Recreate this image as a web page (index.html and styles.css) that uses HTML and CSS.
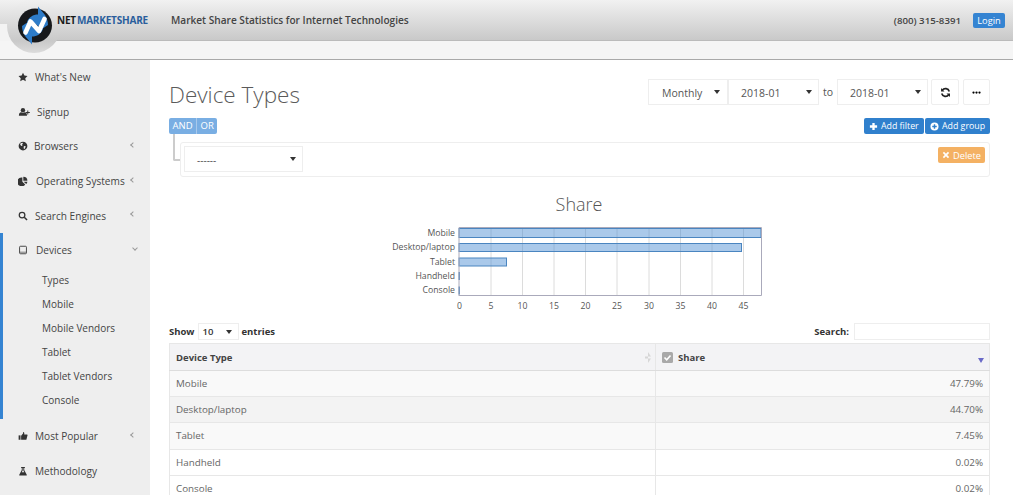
FILE: index.html
```html
<!DOCTYPE html>
<html lang="en">
<head>
<meta charset="utf-8">
<title>Device Types</title>
<link rel="stylesheet" href="styles.css">
</head>
<body>
<div class="app">
  <header class="top">
    <div class="bar">
      <a class="brand"><span class="net">NET</span><span class="ms">MARKETSHARE</span></a>
      <span class="tagline">Market Share Statistics for Internet Technologies</span>
      <span class="phone">(800) 315-8391</span>
      <a class="login">Login</a>
    </div>
    <div class="subbar"></div>
    <div class="corner"></div>
    <div class="halo"></div>
    <svg class="logo" viewBox="0 0 36 41" width="36" height="41">
      <circle cx="18" cy="20.500" r="17" fill="#17191c"/>
      <path d="M10 17C12 12 16 9.500 21 9.500L21 1.500L28 10C30 13 31 17 31 20L25 24L16 17Z" fill="#2e7cc9"/>
      <path d="M26 24C24 29 20 31.500 15 31.500L15 39.500L8 31C6 28 5 24 5 21L11 17L20 24Z" fill="#2e7cc9"/>
      <path d="M8.500 27.500L13.500 16.500L22 26L27.500 14" fill="none" stroke="#fff" stroke-width="4.600" stroke-linejoin="round" stroke-linecap="round"/>
    </svg>
  </header>
  <div class="main">
    <nav class="side">
      <a class="item"><svg class="ic" viewBox="0 0 16 16"><path d="M8 1l2.200 4.600 5 .7-3.600 3.500.9 5L8 12.400l-4.500 2.400.9-5L.8 6.300l5-.7z"/></svg><span>What's New</span></a>
      <a class="item"><svg class="ic wide" viewBox="0 0 18 16"><circle cx="6.500" cy="5" r="3.500"/><path d="M0 14c0-4 2-5.500 3.500-5.500 1 .8 5 .8 6 0 1.500 0 3.500 1.500 3.500 5.500z"/><path d="M13.500 5.500h1.500v2.500h2.500v1.500H15V12h-1.500V9.500H11V8h2.500z"/></svg><span>Signup</span></a>
      <a class="item"><svg class="ic tight" viewBox="0 0 16 16"><circle cx="8" cy="8" r="7"/><path fill="#eee" d="M4 3.500l3-.8 1 1.300-1.500 1.500.8 1.500-2 1-1.800-2zM9.500 8l3 .5L11 12l-1.500 1-.5-3z"/></svg><span>Browsers</span><i class="chev"></i></a>
      <a class="item"><svg class="ic loose" viewBox="0 0 16 16"><path d="M7 2.500V9l4.500 4.500A7 7 0 1 1 7 2.500z"/><path d="M8.500 1a6.500 6.500 0 0 1 6.500 6.500H8.500z"/><path d="M9 9h6a6.500 6.500 0 0 1-1.800 3.800z"/></svg><span>Operating Systems</span><i class="chev"></i></a>
      <a class="item"><svg class="ic" viewBox="0 0 16 16"><circle cx="6.500" cy="6.500" r="4.500" fill="none" stroke="#333" stroke-width="2"/><path d="M10 10l4.500 4.500" fill="none" stroke="#333" stroke-width="2.400"/></svg><span>Search Engines</span><i class="chev"></i></a>
      <div class="group">
        <a class="item"><svg class="ic loose" viewBox="0 0 16 16"><rect x="2.500" y="2" width="11" height="12" rx="1.500" fill="none" stroke="#333" stroke-width="1.400"/><path d="M2.500 11.500h11" stroke="#333" stroke-width="1"/></svg><span>Devices</span><i class="chev down"></i></a>
        <ul class="sub">
          <li>Types</li>
          <li>Mobile</li>
          <li>Mobile Vendors</li>
          <li>Tablet</li>
          <li>Tablet Vendors</li>
          <li>Console</li>
        </ul>
      </div>
      <a class="item"><svg class="ic" viewBox="0 0 16 16"><rect x="1" y="7" width="3" height="7"/><path d="M5 7.500L8 4V1.500c1.500 0 2.500 1 2 4h4.500c1 0 1 1.500.5 2l-1.500 6c-.2.500-.5.500-1 .5H5z"/></svg><span>Most Popular</span><i class="chev"></i></a>
      <a class="item"><svg class="ic" viewBox="0 0 16 16"><path d="M5 1.500h6V3h-1v3.500l4 7.500v1H2v-1l4-7.500V3H5zM7.500 3v4L6 10h4L8.500 7V3z" fill-rule="evenodd"/></svg><span>Methodology</span></a>
    </nav>
    <main class="content">
      <div class="head-row">
        <h1>Device Types</h1>
        <div class="controls">
          <div class="sel sel-a">Monthly</div>
          <div class="sel sel-b">2018-01</div>
          <span class="to">to</span>
          <div class="sel sel-b">2018-01</div>
          <button class="tool"><svg viewBox="0 0 16 16" width="11" height="11"><path d="M13.500 6.500A5.700 5.700 0 0 0 3.300 4.800" fill="none" stroke="#222" stroke-width="2.400"/><path d="M1.500 1.500v5h5z" fill="#222"/><path d="M2.500 9.500a5.700 5.700 0 0 0 10.200 1.700" fill="none" stroke="#222" stroke-width="2.400"/><path d="M14.500 14.500v-5h-5z" fill="#222"/></svg></button>
          <button class="tool last"><svg viewBox="0 0 12 4" width="9" height="3"><circle cx="2" cy="2" r="1.500"/><circle cx="6" cy="2" r="1.500"/><circle cx="10" cy="2" r="1.500"/></svg></button>
        </div>
      </div>
      <div class="logic-row">
        <div class="logic"><span class="lg">AND</span><span class="lg">OR</span></div>
        <div class="adds">
          <a class="add add-f"><svg viewBox="0 0 10 10" width="9" height="9"><path d="M3.700 1h2.600v2.700H9v2.600H6.300V9H3.700V6.300H1V3.700h2.700z" fill="#fff"/></svg>Add filter</a>
          <a class="add add-g"><svg viewBox="0 0 10 10" width="9" height="9"><path fill-rule="evenodd" d="M5 .5a4.500 4.500 0 1 1 0 9 4.500 4.500 0 0 1 0-9zM4.200 2.500v1.700H2.500v1.600h1.700v1.700h1.600V5.800h1.700V4.200H5.800V2.500z" fill="#fff"/></svg>Add group</a>
        </div>
      </div>
      <div class="rule-wrap">
        <div class="rule">
          <div class="sel sel-c">------</div>
          <a class="del"><svg viewBox="0 0 10 10" width="8" height="8"><path d="M2.500 1L5 3.500 7.500 1 9 2.500 6.500 5 9 7.500 7.500 9 5 6.500 2.500 9 1 7.500 3.500 5 1 2.500z" fill="#fff"/></svg>Delete</a>
        </div>
      </div>
      <svg class="chart" viewBox="0 0 821 137" width="821" height="137">
        <text class="c-title" x="410" y="25" text-anchor="middle">Share</text>
        <g class="grid">
          <path d="M322 42v67M353.500 42v67M385 42v67M416.500 42v67M448 42v67M480 42v67M511.500 42v67M543 42v67M574.500 42v67"/>
        </g>
        <g class="bars">
          <rect x="290" y="42.500" width="302" height="9"/>
          <rect x="290" y="57.500" width="282.500" height="8"/>
          <rect x="290" y="72" width="47.500" height="8"/>
          <rect x="290" y="86.500" width="0.500" height="7"/>
          <rect x="290" y="101" width="0.500" height="7"/>
        </g>
        <path class="axis" d="M290 110V41.500H592.500V109.500H290"/>
        <g class="labels" text-anchor="end">
          <text x="286" y="49.500">Mobile</text>
          <text x="286" y="64">Desktop/laptop</text>
          <text x="286" y="78.500">Tablet</text>
          <text x="286" y="92.500">Handheld</text>
          <text x="286" y="107">Console</text>
        </g>
        <g class="labels" text-anchor="middle">
          <text x="290.500" y="122.500">0</text>
          <text x="322" y="122.500">5</text>
          <text x="353.500" y="122.500">10</text>
          <text x="385" y="122.500">15</text>
          <text x="416.500" y="122.500">20</text>
          <text x="448" y="122.500">25</text>
          <text x="480" y="122.500">30</text>
          <text x="511.500" y="122.500">35</text>
          <text x="543" y="122.500">40</text>
          <text x="574.500" y="122.500">45</text>
        </g>
      </svg>
      <div class="dt-row">
        <label class="dt-label">Show <span class="sel sel-d">10</span> entries</label>
        <label class="dt-label search">Search: <input class="dt-input" type="text"></label>
      </div>
      <table class="dt">
        <thead>
          <tr>
            <th class="c1">Device Type<i class="sort"></i></th>
            <th class="c2"><svg class="check" viewBox="0 0 11 11" width="11" height="11"><rect width="11" height="11" rx="1.500" fill="#a9a9a9"/><path d="M2.500 5.500L4.700 7.800 8.500 3.500" fill="none" stroke="#fff" stroke-width="1.600"/></svg>Share<i class="sorted"></i></th>
          </tr>
        </thead>
        <tbody>
          <tr class="s1"><td>Mobile</td><td class="num">47.79%</td></tr>
          <tr class="s2"><td>Desktop/laptop</td><td class="num">44.70%</td></tr>
          <tr class="s1"><td>Tablet</td><td class="num">7.45%</td></tr>
          <tr><td>Handheld</td><td class="num">0.02%</td></tr>
          <tr><td>Console</td><td class="num">0.02%</td></tr>
        </tbody>
      </table>
    </main>
  </div>
</div>
</body>
</html>
```

FILE: styles.css
```css
* { box-sizing: border-box; }
html, body { margin: 0; padding: 0; }
body { font-family: "Open Sans", "Liberation Sans", sans-serif; font-size: 10px; color: #444; background: #fff; }
.app { width: 1013px; height: 495px; overflow: hidden; }

.top { position: relative; height: 60px; border-bottom: 1px solid #a9a9a9; background: #f5f5f5; }
.bar { height: 41px; display: flex; align-items: center; padding: 0 8px 0 57px; background: linear-gradient(#f1f1f1, #c9c9c9); border-bottom: 1px solid #bbb; }
.brand { position: relative; z-index: 6; font-size: 10px; font-weight: 700; width: 114px; letter-spacing: -0.200px; }
.net { color: #1a1a1a; margin-right: 1px; }
.ms { color: #2a5e9c; }
.tagline { position: relative; z-index: 6; font-weight: 600; color: #444; font-size: 10.100px; }
.phone { margin-left: auto; font-weight: 600; color: #444; font-size: 9.700px; }
.login { margin-left: 12px; width: 32px; height: 15px; line-height: 15px; text-align: center; color: #fff; background: #3584d2; border-radius: 2px; font-size: 9.300px; }
.subbar { height: 18px; }
.corner { position: absolute; left: 0; top: 24px; width: 20px; height: 17px; background: #f3f3f3; z-index: 3; }
.halo { position: absolute; left: 7px; top: -1px; width: 54px; height: 54px; border-radius: 50%; background: linear-gradient(#f1f1f1, #c9c9c9 42px, #dcdcdc); z-index: 4; }
.logo { position: absolute; left: 17px; top: 5px; z-index: 5; }

.main { display: flex; height: 435px; }
.side { width: 150px; flex: none; background: #eee; color: #444; }
.item { display: flex; align-items: center; height: 34.600px; padding-left: 18px; position: relative; font-size: 10.100px; }
.ic { width: 10px; height: 10px; fill: #333; margin-right: 7px; flex: none; }
.ic.wide { width: 13px; margin-right: 6px; }
.ic.tight { margin-right: 6px; }
.ic.loose { margin-right: 8px; }
.chev { position: absolute; left: 131px; top: 14px; width: 4px; height: 4px; border-left: 1px solid #999; border-bottom: 1px solid #999; transform: rotate(45deg); }
.chev.down { left: 130px; top: 13px; transform: rotate(-45deg); }
.group { border-left: 3px solid #3584d2; height: 186px; }
.group .item { padding-left: 15px; }
.sub { list-style: none; margin: 0; padding: 0 0 0 39px; }
.sub li { height: 24px; line-height: 24px; font-size: 10px; }

.content { flex: 1; padding: 0 23px 0 19px; min-width: 0; }
.head-row { display: flex; justify-content: space-between; height: 58px; padding-top: 19px; }
h1 { margin: 0; font-size: 22.500px; font-weight: 300; line-height: 32px; color: #5a5a5a; }
.controls { display: flex; align-items: center; height: 26px; }
.sel { position: relative; display: flex; align-items: center; background: #fff; border: 1px solid #eee; color: #555; }
.sel::after { content: ""; position: absolute; top: 50%; margin-top: -2px; border: 3px solid transparent; border-top: 4px solid #333; border-bottom: 0; }
.sel-a { width: 80px; height: 26px; padding: 2px 0 0 13px; font-size: 10.500px; }
.sel-a::after { right: 7px; }
.sel-b { width: 91px; height: 26px; padding: 2px 0 0 12px; font-size: 10.500px; }
.sel-b::after { right: 6px; }
.to { width: 18px; text-align: center; font-size: 10.500px; color: #555; }
.tool { width: 28px; height: 26px; margin-left: 3px; padding: 0; display: flex; align-items: center; justify-content: center; background: #fff; border: 1px solid #eee; border-radius: 2px; }
.tool.last { margin-left: 4px; width: 27px; }

.logic-row { display: flex; justify-content: space-between; height: 16px; }
.logic { display: flex; border-radius: 2px; overflow: hidden; }
.lg { background: #79aee3; color: #fff; line-height: 16px; padding: 0 3.500px; font-size: 9.500px; }
.lg + .lg { border-left: 1px solid #a8c9ec; }
.adds { display: flex; }
.add { display: flex; align-items: center; gap: 3px; height: 16px; background: #3080cd; color: #fff; padding: 0 3px 0 5px; border-radius: 2px; white-space: nowrap; font-size: 8.800px; }
.add-f { width: 60px; }
.add-g { width: 65px; margin-left: 1px; }

.rule-wrap { position: relative; margin-top: 8px; padding-left: 11px; }
.rule-wrap::before { content: ""; position: absolute; left: 4px; top: -8px; width: 8px; height: 25px; border-left: 2px solid #ccc; border-bottom: 2px solid #ccc; border-bottom-left-radius: 2px; }
.rule { position: relative; display: flex; justify-content: space-between; height: 35px; padding: 3px 4px 0 3px; border: 1px solid #eee; border-radius: 3px; background: #fff; }
.sel-c { width: 119px; height: 26px; padding: 2px 0 0 12px; font-size: 10px; }
.sel-c::after { right: 6px; }
.del { display: flex; align-items: center; gap: 3px; height: 16px; margin-top: 1px; padding: 0 4px; width: 47px; color: #fff; background: #f4b163; border-radius: 2px; font-size: 9.300px; white-space: nowrap; }

.chart { display: block; margin-top: 9px; }
.c-title { font-size: 18px; font-weight: 300; fill: #555; }
.grid path { stroke: #dcdcdc; fill: none; }
.bars rect { fill: rgba(66, 135, 208, 0.45); stroke: #4a85c0; stroke-width: 1; }
.axis { fill: none; stroke: #aab; stroke-width: 1; }
.labels text { font-size: 8.700px; fill: #555; }

.dt-row { display: flex; justify-content: space-between; align-items: center; height: 17px; }
.dt-label { display: flex; align-items: center; font-weight: 700; color: #333; font-size: 9.500px; gap: 3px; }
.sel-d { width: 41px; height: 17px; padding-left: 4px; font-weight: 600; color: #333; }
.sel-d::after { right: 6px; }
.search { gap: 5px; }
.dt-input { width: 136px; height: 17px; border: 1px solid #eee; padding: 0; margin: 0; background: #fff; }
.dt { width: 821px; border-collapse: collapse; margin-top: 3px; table-layout: fixed; }
.dt th { height: 27px; background: #f3f3f5; border: 1px solid #e7e7e7; border-bottom-color: #ddd; text-align: left; padding: 0 6px; font-weight: 700; font-size: 9.500px; color: #444; position: relative; }
.dt th.c1 { width: 486px; }
.dt td { height: 26.200px; padding: 0 6px; border: 1px solid #e7e7e7; border-top-color: #ddd; color: #666; font-size: 9.800px; }
.s1 td { background: #f9f9f9; }
.s2 td { background: #f3f3f3; }
.num { text-align: right; }
.check { vertical-align: -2px; margin-right: 5px; }
.sort { position: absolute; right: 4px; top: 8px; width: 6px; height: 11px; background: #d6d6d6; clip-path: polygon(50% 0, 100% 40%, 0 40%, 0 60%, 100% 60%, 50% 100%); }
.sorted { position: absolute; right: 5px; bottom: 7.500px; border: 3px solid transparent; border-top: 5px solid #6a6ac8; border-bottom: 0; }
```
